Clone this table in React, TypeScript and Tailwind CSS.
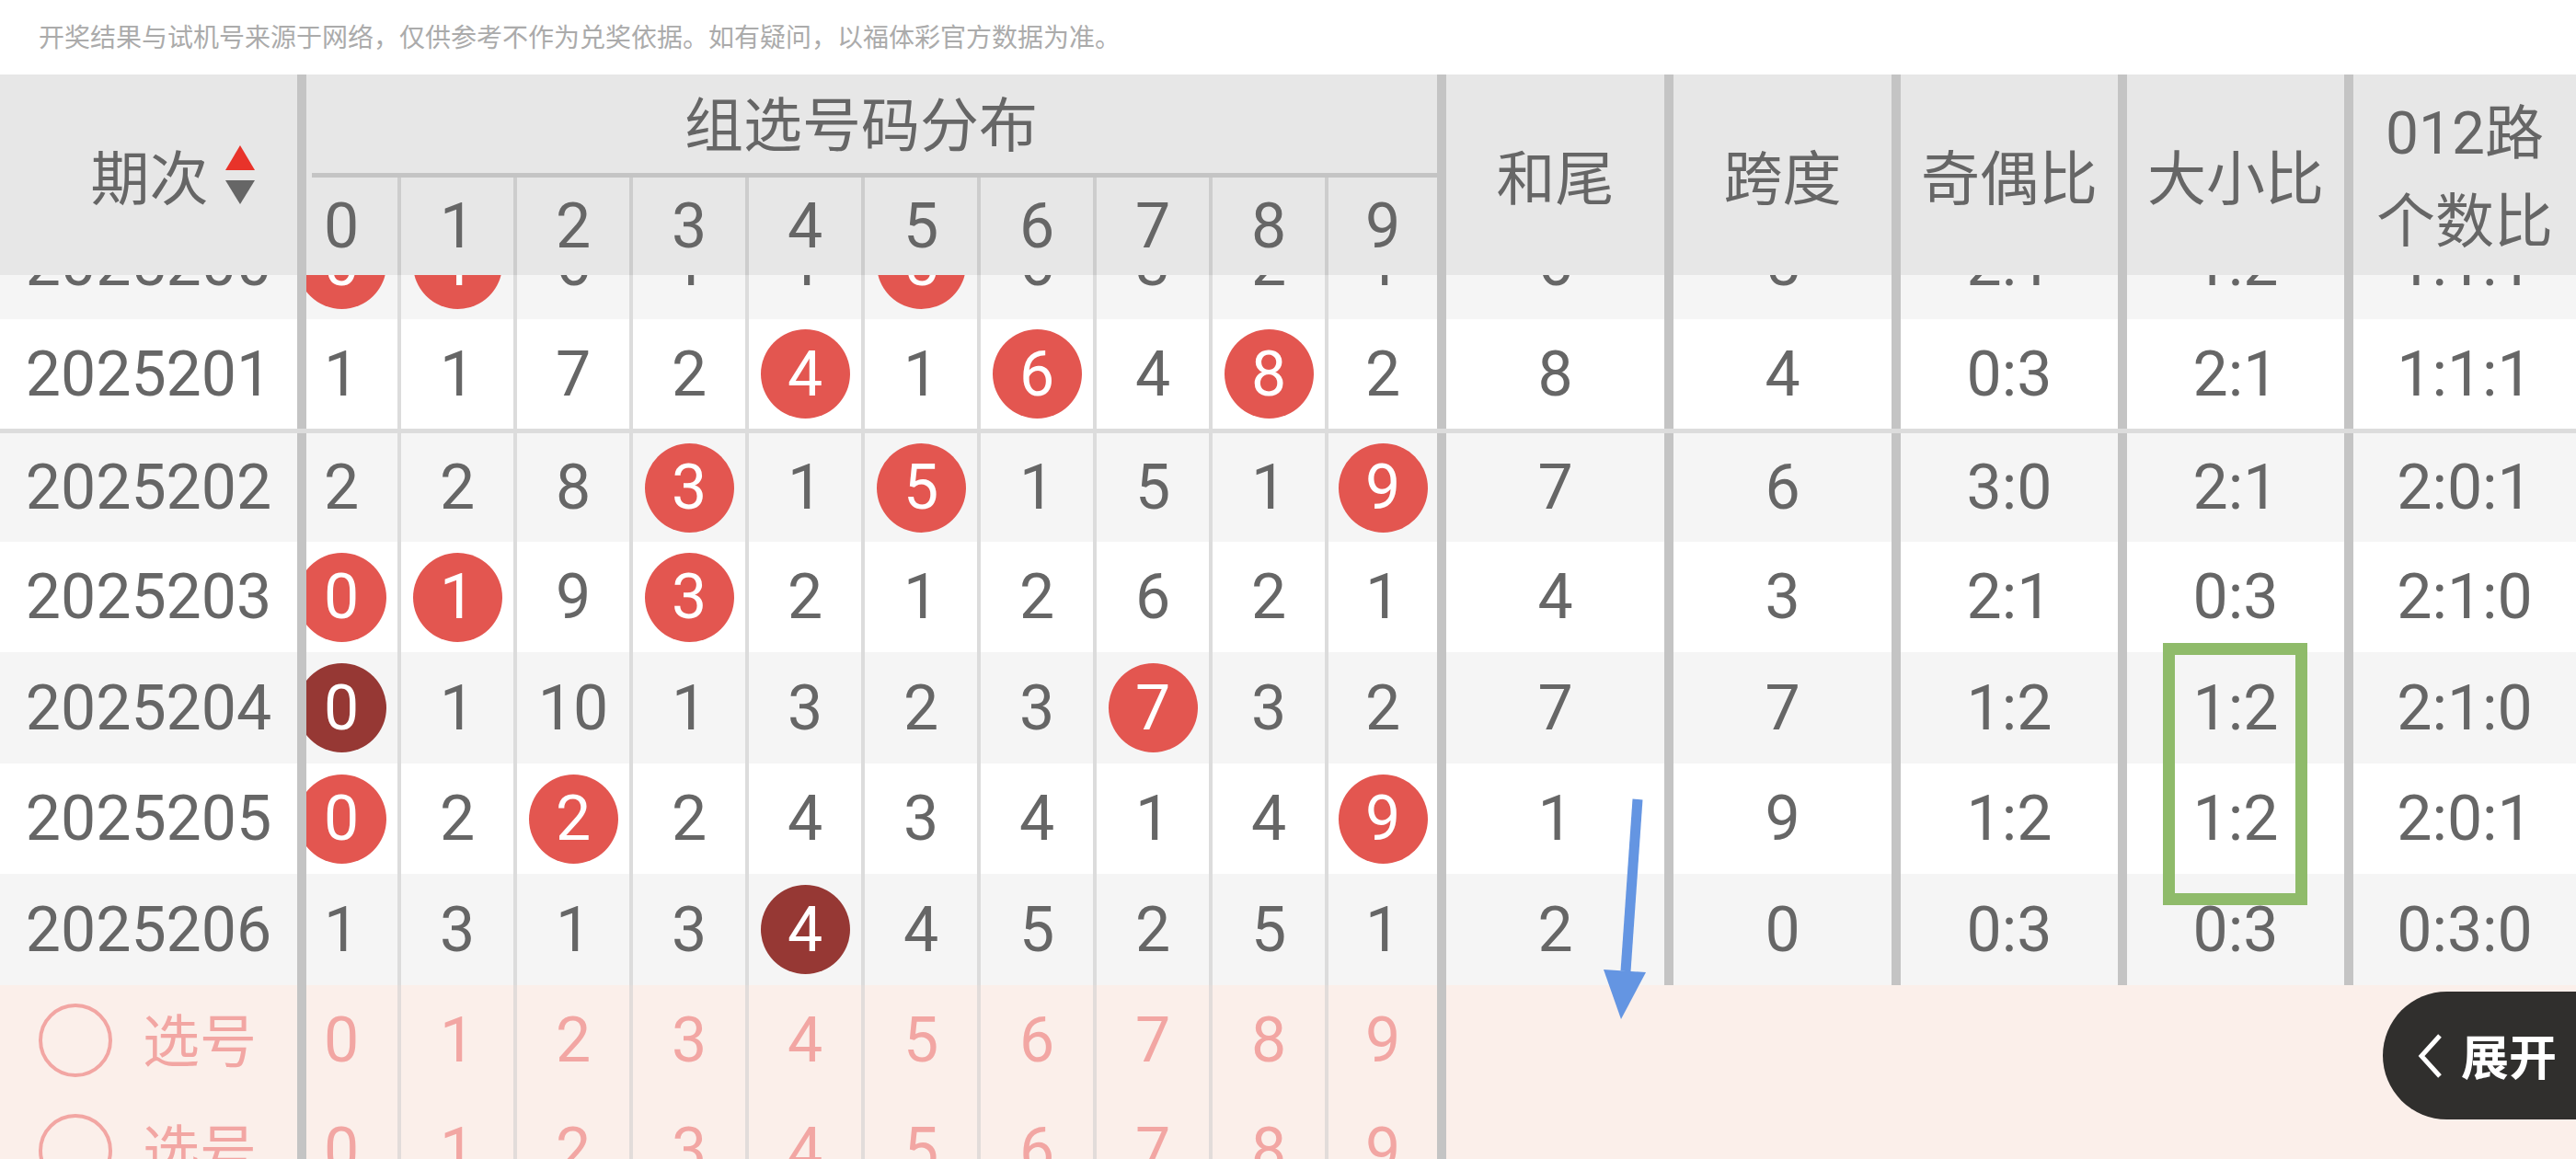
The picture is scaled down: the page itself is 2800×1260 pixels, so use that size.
import React from "react";

type DrawRow = {
  id: string;
  cells: string[];
  hits: number[];
  dark?: number[];
  tail: string;
  span: string;
  oddEven: string;
  bigSmall: string;
  road: string;
  cls: string;
};

const rows: DrawRow[] = [
  {
    id: "2025201",
    cells: ["1", "1", "7", "2", "4", "1", "6", "4", "8", "2"],
    hits: [4, 6, 8],
    tail: "8",
    span: "4",
    oddEven: "0:3",
    bigSmall: "2:1",
    road: "1:1:1",
    cls: "h-[124px] bg-white border-b-[5px] border-[#dcdcdc]",
  },
  {
    id: "2025202",
    cells: ["2", "2", "8", "3", "1", "5", "1", "5", "1", "9"],
    hits: [3, 5, 9],
    tail: "7",
    span: "6",
    oddEven: "3:0",
    bigSmall: "2:1",
    road: "2:0:1",
    cls: "h-[118px] bg-[#f5f5f5]",
  },
  {
    id: "2025203",
    cells: ["0", "1", "9", "3", "2", "1", "2", "6", "2", "1"],
    hits: [0, 1, 3],
    tail: "4",
    span: "3",
    oddEven: "2:1",
    bigSmall: "0:3",
    road: "2:1:0",
    cls: "h-[120px] bg-white",
  },
  {
    id: "2025204",
    cells: ["0", "1", "10", "1", "3", "2", "3", "7", "3", "2"],
    hits: [0, 7],
    dark: [0],
    tail: "7",
    span: "7",
    oddEven: "1:2",
    bigSmall: "1:2",
    road: "2:1:0",
    cls: "h-[121px] bg-[#f5f5f5]",
  },
  {
    id: "2025205",
    cells: ["0", "2", "2", "2", "4", "3", "4", "1", "4", "9"],
    hits: [0, 2, 9],
    tail: "1",
    span: "9",
    oddEven: "1:2",
    bigSmall: "1:2",
    road: "2:0:1",
    cls: "h-[120px] bg-white",
  },
  {
    id: "2025206",
    cells: ["1", "3", "1", "3", "4", "4", "5", "2", "5", "1"],
    hits: [4],
    dark: [4],
    tail: "2",
    span: "0",
    oddEven: "0:3",
    bigSmall: "0:3",
    road: "0:3:0",
    cls: "h-[121px] bg-[#f5f5f5]",
  },
];

// the half-hidden row under the sticky header
const topRow: DrawRow = {
  id: "2025200",
  cells: ["0", "1", "6", "1", "1", "5", "6", "3", "2", "1"],
  hits: [0, 1, 5],
  tail: "6",
  span: "5",
  oddEven: "2:1",
  bigSmall: "1:2",
  road: "1:1:1",
  cls: "h-[120px] bg-[#f5f5f5]",
};

const digits = ["0", "1", "2", "3", "4", "5", "6", "7", "8", "9"];

// number columns: first and last a bit narrower, inner ones carry a 4px divider
function colClass(i: number, line: string) {
  if (i === 0) return "w-[122px]";
  if (i === 9) return `w-[122px] border-l-4 ${line}`;
  return `w-[126px] border-l-4 ${line}`;
}

function SortArrows() {
  return (
    <svg width="32" height="64" viewBox="0 0 32 64" className="ml-[18px] shrink-0">
      <polygon points="16,0 32,27 0,27" fill="#e8332a" />
      <polygon points="0,38 32,38 16,64" fill="#666666" />
    </svg>
  );
}

function Ball({ n, dark }: { n: string; dark?: boolean }) {
  return (
    <span
      className={`flex h-[97px] w-[97px] shrink-0 items-center justify-center rounded-full text-white ${
        dark ? "bg-[#963834]" : "bg-[#e35650]"
      }`}
    >
      {n}
    </span>
  );
}

function StatCells({ r }: { r: DrawRow }) {
  const base = "flex items-center justify-center border-l-[10px] border-[#c4c4c4]";
  return (
    <>
      <div className={`${base} w-[247px] shrink-0`}>{r.tail}</div>
      <div className={`${base} w-[247px] shrink-0`}>{r.span}</div>
      <div className={`${base} w-[246px] shrink-0`}>{r.oddEven}</div>
      <div className={`${base} w-[246px] shrink-0`}>{r.bigSmall}</div>
      <div className={`${base} w-[252px] shrink-0`}>{r.road}</div>
    </>
  );
}

function DataRow({ r }: { r: DrawRow }) {
  return (
    <div className={`flex ${r.cls}`}>
      <div className="flex w-[333px] shrink-0 items-center justify-center border-r-[10px] border-[#c4c4c4]">
        {r.id}
      </div>
      <div className="flex-1 overflow-hidden">
        <div className="-ml-[23px] flex h-full">
          {r.cells.map((v, i) => (
            <div
              key={i}
              className={`flex shrink-0 items-center justify-center ${colClass(i, "border-[#dcdcdc]")}`}
            >
              {r.hits.includes(i) ? <Ball n={v} dark={r.dark?.includes(i)} /> : v}
            </div>
          ))}
          <StatCells r={r} />
        </div>
      </div>
    </div>
  );
}

function PickRow() {
  return (
    <div className="flex h-[120px] shrink-0 bg-[#fbefea] text-[#f2a6a3]">
      <div className="flex w-[333px] shrink-0 items-center gap-[33px] border-r-[10px] border-[#c4c4c4] pl-[42px]">
        <span className="h-[80px] w-[80px] shrink-0 rounded-full border-4 border-[#f2a6a3]" />
        <span className="pt-[6px] text-[62px]">选号</span>
      </div>
      <div className="flex-1 overflow-hidden">
        <div className="-ml-[23px] flex h-full">
          {digits.map((d, i) => (
            <div
              key={d}
              className={`flex shrink-0 items-center justify-center ${colClass(i, "border-[#e2dcda]")}`}
            >
              {d}
            </div>
          ))}
          <div className="flex-1 border-l-[10px] border-[#c4c4c4]" />
        </div>
      </div>
    </div>
  );
}

export default function App() {
  const headCell = "flex shrink-0 items-center justify-center border-l-[10px] border-[#c4c4c4] text-[64px]";
  return (
    <div className="relative h-[1260px] w-[2800px] overflow-hidden bg-white font-['Roboto','Noto_Sans_CJK_SC',sans-serif] text-[68px] leading-none text-[#666666]">
      {/* disclaimer */}
      <div className="flex h-[81px] items-center pl-[42px] pt-[2px] text-[28px] text-[#ababab]">
        开奖结果与试机号来源于网络，仅供参考不作为兑奖依据。如有疑问，以福体彩官方数据为准。
      </div>

      {/* header */}
      <div className="flex h-[218px] bg-[#e7e7e7]">
        <div className="flex w-[333px] shrink-0 items-center justify-center border-r-[10px] border-[#c4c4c4] pl-[52px] text-[64px]">
          <span className="pt-[12px]">期次</span>
          <SortArrows />
        </div>
        <div className="flex-1 overflow-hidden">
          <div className="-ml-[23px] flex h-full">
            <div className="flex w-[1252px] shrink-0 flex-col">
              <div className="flex h-[107px] items-center justify-center pt-[6px] text-[64px]">组选号码分布</div>
              <div className="ml-[29px] h-[5px] bg-[#c4c4c4]" />
              <div className="flex h-[106px]">
                {digits.map((d, i) => (
                  <div
                    key={d}
                    className={`flex shrink-0 items-center justify-center ${colClass(i, "border-[#cdcdcd]")}`}
                  >
                    {d}
                  </div>
                ))}
              </div>
            </div>
            <div className={`${headCell} w-[247px] pt-[12px]`}>和尾</div>
            <div className={`${headCell} w-[247px] pt-[12px]`}>跨度</div>
            <div className={`${headCell} w-[246px] pt-[12px]`}>奇偶比</div>
            <div className={`${headCell} w-[246px] pt-[12px]`}>大小比</div>
            <div className={`${headCell} w-[252px] flex-col pt-[8px]`}>
              <span className="leading-[96px]">012路</span>
              <span className="leading-[96px]">个数比</span>
            </div>
          </div>
        </div>
      </div>

      {/* body */}
      <div className="h-[48px] overflow-hidden">
        <div className="-mt-[72px]">
          <DataRow r={topRow} />
        </div>
      </div>
      {rows.map((r) => (
        <DataRow key={r.id} r={r} />
      ))}
      <PickRow />
      <PickRow />

      {/* annotations */}
      <div className="absolute left-[2351px] top-[699px] h-[285px] w-[157px] border-[13px] border-[#8fbb6a]" />
      <svg
        className="absolute left-[1735px] top-[860px]"
        width="60"
        height="255"
        viewBox="0 0 60 255"
      >
        <line x1="45" y1="9" x2="32" y2="196" stroke="#6495e2" strokeWidth="11" />
        <polygon points="8,194 54,197 27,248" fill="#6495e2" />
      </svg>

      {/* expand button */}
      <div className="absolute left-[2590px] top-[1078px] flex h-[139px] w-[210px] items-center gap-[20px] rounded-l-full bg-[#302f2d] pl-[38px]">
        <svg width="27" height="50" viewBox="0 0 27 50">
          <polyline points="24,3 4,25 24,47" fill="none" stroke="#ffffff" strokeWidth="5" />
        </svg>
        <span className="pt-[8px] text-[52px] font-bold text-white">展开</span>
      </div>
    </div>
  );
}
